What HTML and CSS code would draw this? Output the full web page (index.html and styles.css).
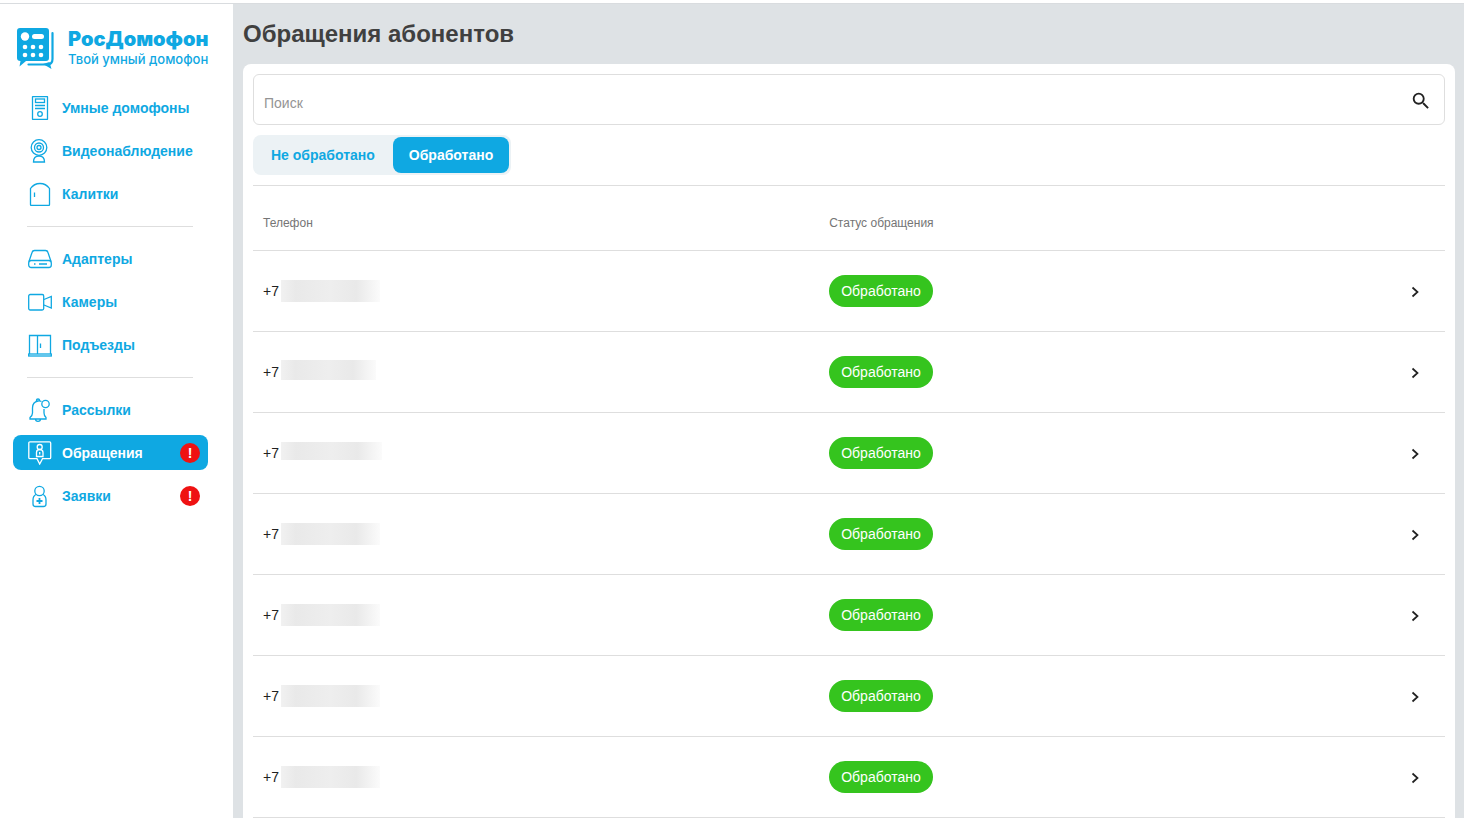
FILE: index.html
```html
<!DOCTYPE html>
<html lang="ru">
<head>
<meta charset="utf-8">
<title>Обращения абонентов</title>
<link rel="stylesheet" href="styles.css">
</head>
<body>
<div class="app">
  <aside class="sidebar">
    <a class="logo" href="#">
      <svg class="logo-mark" width="38" height="42" viewBox="0 0 38 42" fill="currentColor">
        <path d="M3 0H29a3 3 0 0 1 3 3V30a3 3 0 0 1-3 3H9L2.500 38.500 3.500 33Q0 33 0 30V3a3 3 0 0 1 3-3Z"/>
        <path d="M35.500 5V31Q35.500 36.500 30 36.500H11.500" fill="none" stroke="currentColor" stroke-width="2.200" stroke-linecap="round"/>
        <path d="M26 36 34.500 41 32.500 34Z"/>
        <g fill="#fff"><circle cx="8" cy="8.500" r="4.200"/><rect x="15" y="6" width="12" height="5" rx="2.500"/>
        <circle cx="8" cy="19" r="2.300"/><circle cx="16" cy="19" r="2.300"/><circle cx="24" cy="19" r="2.300"/>
        <circle cx="8" cy="27" r="2.300"/><circle cx="16" cy="27" r="2.300"/><circle cx="24" cy="27" r="2.300"/></g>
      </svg>
      <span class="logo-text"><span class="logo-name">РосДомофон</span><span class="logo-slogan">Твой умный домофон</span></span>
    </a>
    <nav class="menu">
      <ul class="menu-group">
        <li><a class="menu-item" href="#"><svg class="icon" viewBox="0 0 24 24"><rect x="4.500" y=".5" width="15" height="23" rx=".5"/><rect x="7.500" y="3" width="9" height="3.500"/><path d="M7 9.500H17M7 12.500H17"/><circle cx="12" cy="18" r="2.300"/></svg>Умные домофоны</a></li>
        <li><a class="menu-item" href="#"><svg class="icon" viewBox="0 0 24 24"><circle cx="11" cy="8.500" r="7.800"/><circle cx="11" cy="8.500" r="4.500"/><circle cx="11" cy="8.500" r="2"/><path d="M5.500 23H16.500Q16.500 17 11 17T5.500 23Z"/></svg>Видеонаблюдение</a></li>
        <li><a class="menu-item" href="#"><svg class="icon" viewBox="0 0 24 24"><path d="M2.500 22.500V6.500Q6 1.500 12 1.500T21.500 6.500V22.500a1 1 0 0 1-1 1H3.500a1 1 0 0 1-1-1ZM6.500 10.500V15"/></svg>Калитки</a></li>
      </ul>
      <ul class="menu-group">
        <li><a class="menu-item" href="#"><svg class="icon" viewBox="0 0 24 24"><path d="M1 14.500 4 5.500Q4.500 3.500 6.500 3.500H17.500Q19.500 3.500 20 5.500L23 14.500"/><rect x=".7" y="13.500" width="22.600" height="7" rx="2.500"/><path d="M6 17H7.500M11 17H19"/></svg>Адаптеры</a></li>
        <li><a class="menu-item" href="#"><svg class="icon" viewBox="0 0 24 24"><rect x=".7" y="4.500" width="15" height="15.500" rx="1.500"/><path d="M16 9.500 23.300 6.500V18L16 15"/></svg>Камеры</a></li>
        <li><a class="menu-item" href="#"><svg class="icon" viewBox="0 0 24 24"><path d="M1.500 21V2.500H22.500V21M9.500 2.500V21M12.500 10.500V15"/><rect x=".7" y="21" width="22.600" height="2"/></svg>Подъезды</a></li>
      </ul>
      <ul class="menu-group">
        <li><a class="menu-item" href="#"><svg class="icon" viewBox="0 0 24 24"><path d="M13.500 3.500Q12 2.700 10 3 4.500 4 4.500 10V15Q4.500 17.500 2 19.500V21H18V19.500Q16 17.500 16 15V11M8.500 3V2Q8.500 1 10 1T11.500 2V3M7.500 21Q7.500 23.300 10 23.300T12.500 21"/><circle cx="17.500" cy="6" r="3.700"/></svg>Рассылки</a></li>
        <li><a class="menu-item menu-item-active" href="#" aria-current="page"><svg class="icon" viewBox="0 0 24 24"><path d="M2 .8H21.500a1.200 1.200 0 0 1 1.200 1.200V16.500a1.200 1.200 0 0 1-1.200 1.200H14.500L11.700 23 9 17.700H2A1.200 1.200 0 0 1 .8 16.500V2A1.200 1.200 0 0 1 2 .8Z"/><circle cx="11.700" cy="6" r="2.500"/><path d="M8.500 15.500V11.500Q8.500 8.500 11.700 8.500T15 11.500V15.500ZM11.700 11V13.500"/></svg>Обращения<span class="alert">!</span></a></li>
        <li><a class="menu-item" href="#"><svg class="icon" viewBox="0 0 24 24"><circle cx="11.500" cy="7" r="4.700"/><path d="M8 10.500Q5 12 5 16V20Q5 22.500 7.500 22.500H15.500Q18 22.500 18 20V16Q18 12 15 10.500"/><path d="M11.500 14V20M8.500 17H14.500" stroke-width="1.800"/></svg>Заявки<span class="alert">!</span></a></li>
      </ul>
    </nav>
  </aside>
  <main class="main">
    <h1 class="title">Обращения абонентов</h1>
    <section class="card">
      <form class="search">
        <input class="search-input" type="text" placeholder="Поиск" aria-label="Поиск">
        <button class="search-button" type="button" aria-label="Найти"><svg width="22" height="22" viewBox="0 0 24 24" fill="currentColor"><path d="M15.500 14h-.79l-.28-.27A6.470 6.470 0 0 0 16 9.500 6.500 6.500 0 1 0 9.500 16c1.610 0 3.090-.59 4.230-1.570l.27.28v.79l5 4.990L20.490 19l-4.990-5zm-6 0C7.010 14 5 11.990 5 9.500S7.010 5 9.500 5 14 7.010 14 9.500 11.990 14 9.500 14z"/></svg></button>
      </form>
      <div class="tabs">
        <button class="tab" type="button">Не обработано</button>
        <button class="tab tab-active" type="button">Обработано</button>
      </div>
      <table class="requests">
        <thead><tr><th class="col-phone">Телефон</th><th>Статус обращения</th><th class="col-open"></th></tr></thead>
        <tbody>
          <tr><td><span class="phone">+7 <span class="mask"></span></span></td><td><span class="status">Обработано</span></td><td class="open"><button class="open-button" type="button" aria-label="Открыть"><svg width="9" height="12" viewBox="0 0 9 12"><path d="M1.500 1.500 6.500 6 1.500 10.500"/></svg></button></td></tr>
          <tr><td><span class="phone">+7 <span class="mask mask-short"></span></span></td><td><span class="status">Обработано</span></td><td class="open"><button class="open-button" type="button" aria-label="Открыть"><svg width="9" height="12" viewBox="0 0 9 12"><path d="M1.500 1.500 6.500 6 1.500 10.500"/></svg></button></td></tr>
          <tr><td><span class="phone">+7 <span class="mask mask-slim"></span></span></td><td><span class="status">Обработано</span></td><td class="open"><button class="open-button" type="button" aria-label="Открыть"><svg width="9" height="12" viewBox="0 0 9 12"><path d="M1.500 1.500 6.500 6 1.500 10.500"/></svg></button></td></tr>
          <tr><td><span class="phone">+7 <span class="mask"></span></span></td><td><span class="status">Обработано</span></td><td class="open"><button class="open-button" type="button" aria-label="Открыть"><svg width="9" height="12" viewBox="0 0 9 12"><path d="M1.500 1.500 6.500 6 1.500 10.500"/></svg></button></td></tr>
          <tr><td><span class="phone">+7 <span class="mask"></span></span></td><td><span class="status">Обработано</span></td><td class="open"><button class="open-button" type="button" aria-label="Открыть"><svg width="9" height="12" viewBox="0 0 9 12"><path d="M1.500 1.500 6.500 6 1.500 10.500"/></svg></button></td></tr>
          <tr><td><span class="phone">+7 <span class="mask"></span></span></td><td><span class="status">Обработано</span></td><td class="open"><button class="open-button" type="button" aria-label="Открыть"><svg width="9" height="12" viewBox="0 0 9 12"><path d="M1.500 1.500 6.500 6 1.500 10.500"/></svg></button></td></tr>
          <tr><td><span class="phone">+7 <span class="mask"></span></span></td><td><span class="status">Обработано</span></td><td class="open"><button class="open-button" type="button" aria-label="Открыть"><svg width="9" height="12" viewBox="0 0 9 12"><path d="M1.500 1.500 6.500 6 1.500 10.500"/></svg></button></td></tr>
        </tbody>
      </table>
    </section>
  </main>
</div>
</body>
</html>
```
FILE: styles.css
```css
* { box-sizing: border-box; }

body {
  margin: 0;
  background: #fff;
  color: #212121;
  font: 14px/20px "Liberation Sans", Arial, sans-serif;
}

button, input { font: inherit; }

.app {
  display: flex;
  height: 100vh;
  padding-top: 3px;
  overflow: hidden;
}

.sidebar {
  flex: 0 0 233px;
  min-width: 0;
  border-top: 1px solid #d9dcdf;
  color: #0fa8e2;
}

.logo {
  display: flex;
  gap: 13px;
  padding: 24px 8px 0 17px;
  color: inherit;
  text-decoration: none;
}

.logo-mark { flex: none; }

.logo-text {
  display: flex;
  flex-direction: column;
  white-space: nowrap;
}

.logo-name {
  font: 900 20px/22px Inter, sans-serif;
}

.logo-slogan {
  font: 500 13px/18px Inter, sans-serif;
}

.menu { padding: 20px 25px 0 13px; }

.menu-group {
  margin: 0;
  padding: 0;
  list-style: none;
  display: flex;
  flex-direction: column;
  gap: 8px;
}

.menu-group + .menu-group {
  position: relative;
  margin-top: 30px;
}

.menu-group + .menu-group::before {
  content: "";
  position: absolute;
  top: -15px;
  left: 14px;
  right: 15px;
  border-top: 1px solid #dedede;
}

.menu-item {
  display: flex;
  align-items: center;
  gap: 10px;
  height: 35px;
  padding: 0 8px 0 15px;
  border-radius: 8px;
  color: inherit;
  font-weight: 700;
  text-decoration: none;
  white-space: nowrap;
}

.menu-item-active {
  background: #0fa8e2;
  color: #fff;
}

.icon {
  flex: none;
  width: 24px;
  height: 24px;
  fill: none;
  stroke: currentColor;
  stroke-width: 1.3;
}

.alert {
  margin-left: auto;
  width: 20px;
  height: 20px;
  border-radius: 50%;
  background: #ef1212;
  color: #fff;
  text-align: center;
}

.main {
  flex: 1;
  min-width: 0;
  padding: 0 9px 0 10px;
  border-top: 1px solid #d9dcdf;
  background: #dee2e5;
}

.title {
  margin: 0;
  padding: 16px 0;
  color: #404040;
  font-size: 24px;
  line-height: 28px;
}

.card {
  min-height: 100%;
  padding: 10px;
  border-radius: 8px;
  background: #fff;
}

.search {
  display: flex;
  align-items: center;
  height: 51px;
  padding: 0 12px 0 10px;
  border: 1px solid #dedede;
  border-radius: 6px;
}

.search-input {
  flex: 1;
  min-width: 0;
  padding: 6px 0 0;
  border: 0;
  outline: 0;
  background: none;
}

.search-input::placeholder { color: #949494; }

.search-button, .open-button {
  display: flex;
  padding: 0;
  border: 0;
  background: none;
  color: #212121;
}

.search-button { padding-top: 2px; }

.tabs {
  display: inline-flex;
  gap: 2px;
  margin: 10px 0;
  padding: 2px;
  border-radius: 8px;
  background: #ecf2f5;
  vertical-align: top;
}

.tab {
  height: 36px;
  padding: 0 16px;
  border: 0;
  border-radius: 8px;
  background: none;
  color: #0fa8e2;
  font-weight: 700;
}

.tab-active {
  background: #0fa8e2;
  color: #fff;
}

.requests {
  width: 100%;
  border-top: 1px solid #dedede;
  border-spacing: 0;
  table-layout: fixed;
}

.requests th {
  height: 65px;
  padding: 10px 10px 0;
  border-bottom: 1px solid #dedede;
  color: #757575;
  font-size: 12px;
  font-weight: 400;
  text-align: left;
}

.requests td {
  height: 81px;
  padding: 0 10px;
  border-bottom: 1px solid #dedede;
}

.requests .col-phone { width: 47.5%; }
.requests .col-open { width: 60px; }

.phone {
  display: flex;
  align-items: center;
  gap: 2px;
  height: 22px;
}

.mask {
  width: 99px;
  height: 22px;
  background: linear-gradient(90deg, #f1f1f1, #e9e9e9 15%, #eee 50%, #e9e9e9 76%, #fbfbfb);
}

.mask-short {
  width: 95px;
  height: 20px;
  margin-bottom: 4px;
}

.mask-slim {
  width: 101px;
  height: 18px;
  margin-bottom: 4px;
}

.status {
  display: inline-block;
  padding: 6px 12px;
  border-radius: 16px;
  background: #35c41e;
  color: #fff;
  vertical-align: middle;
}

.open-button {
  margin-left: auto;
  padding: 2px 15px 0;
}

.open-button svg {
  fill: none;
  stroke: currentColor;
  stroke-width: 1.7;
}
```
